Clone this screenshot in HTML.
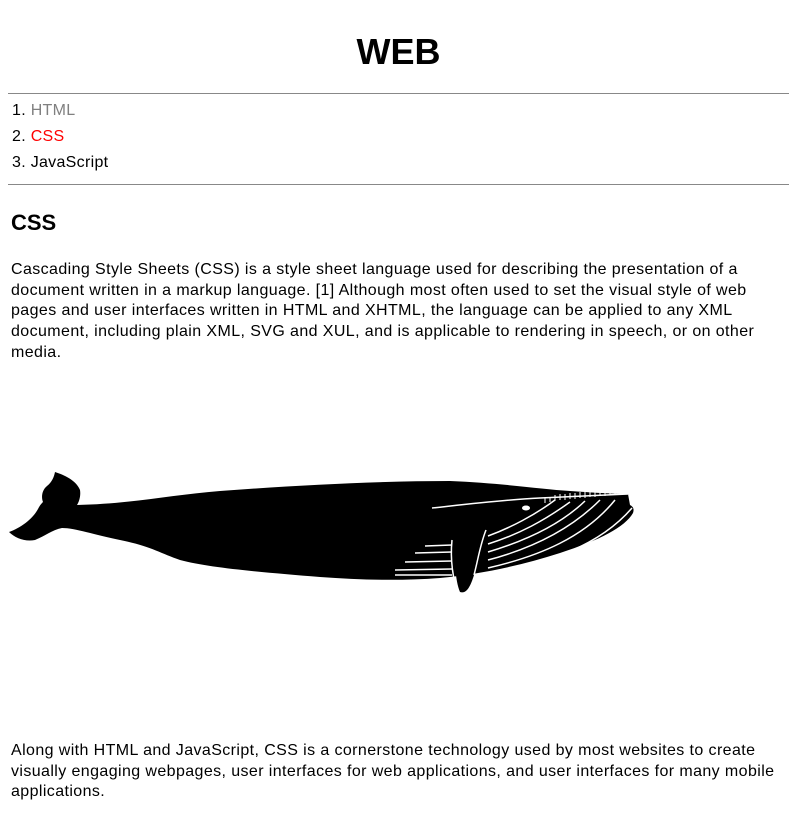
<!DOCTYPE html>
<html><head><meta charset="utf-8"><style>
body{margin:0;width:797px;height:821px;position:relative;background:#fff;font-family:"Liberation Sans","NanumGothic",sans-serif;color:#000;overflow:hidden}
.a{position:absolute;margin:0}
h1{font-size:36px;font-weight:bold;left:0;width:797px;text-align:center;top:30px;line-height:44px}
.hr{left:8px;width:781px;height:1px;background:#888}
.li{left:12px;font-size:16px;line-height:20px;letter-spacing:0.3px}
h2{font-size:22px;font-weight:bold;left:11px;top:210px;line-height:26px}
p{left:11px;width:790px;font-size:16px;line-height:20.7px;white-space:nowrap;letter-spacing:0.4px}
</style></head><body>
<h1 class="a">WEB</h1>
<div class="a hr" style="top:93px"></div>
<div class="a li" style="top:101px">1. <span style="color:#808080">HTML</span></div>
<div class="a li" style="top:127px">2. <span style="color:#f00">CSS</span></div>
<div class="a li" style="top:153px">3. JavaScript</div>
<div class="a hr" style="top:184px"></div>
<h2 class="a">CSS</h2>
<p class="a" style="top:260px">Cascading Style Sheets (CSS) is a style sheet language used for describing the presentation of a<br>document written in a markup language. [1] Although most often used to set the visual style of web<br>pages and user interfaces written in HTML and XHTML, the language can be applied to any XML<br>document, including plain XML, SVG and XUL, and is applicable to rendering in speech, or on other<br>media.</p>
<svg class="a" style="left:0;top:0" width="797" height="821">
<path fill="#000" d="M9,532 C20,528 32,520 38,509 C40,505 42,503 43,502 C41,497 42,490 47,486 C52,482 54,477 55,472 C64,475 76,480 80,490 C81,496 79,502 77,505 C130,504 170,495 220,491 C300,485 380,481 450,481 C500,483 540,489 570,491 C600,493 615,494 628,494 L630,505 C634,507 634,510 633,513 C625,527 600,540 560,553 C520,566 480,574 440,578 C400,581 360,580 320,577 C260,572 210,568 180,560 C160,553 150,546 120,540 C95,535 75,528 62,528 C52,530 45,536 35,540 C25,542 15,538 9,532 Z"/>
<path fill="#000" d="M452,540 C455,560 455,580 460,592 C466,594 470,588 474,575 C478,560 480,545 486,530 C475,530 460,535 452,540 Z"/>
<g stroke="#fff" stroke-width="1.5" fill="none">
<path d="M432,508 C460,505 500,500 540,498 L628,494"/>
<path d="M488,536 C510,528 535,515 555,500"/><path d="M488,544 C520,534 545,520 570,502"/>
<path d="M488,552 C525,541 560,525 585,501"/><path d="M488,560 C530,549 570,530 600,500"/>
<path d="M488,568 C540,556 585,537 615,500"/><path d="M488,574 C550,563 600,545 632,508"/>
<path d="M395,575 L452,575"/><path d="M395,570 L452,569"/><path d="M405,562 L452,561"/><path d="M415,553 L452,552"/><path d="M425,546 L452,545"/>
<path d="M452,540 C450,560 453,580 458,592"/>
<path d="M474,575 C478,560 480,545 486,530"/>
</g>
<g stroke="#fff" stroke-width="1">
<path d="M545,503v-5M550,502v-5M555,501v-6M560,500v-6M565,500v-6M570,499v-6M575,499v-6M580,498v-6M585,498v-7M590,497v-7M595,497v-7M600,496v-7M605,496v-7M610,495v-7M615,495v-7M620,495v-7M625,494v-7"/>
</g>
<ellipse cx="526" cy="508" rx="4" ry="2.5" fill="#fff"/>
</svg>
<p class="a" style="top:741px">Along with HTML and JavaScript, CSS is a cornerstone technology used by most websites to create<br>visually engaging webpages, user interfaces for web applications, and user interfaces for many mobile<br>applications.</p>
</body></html>
